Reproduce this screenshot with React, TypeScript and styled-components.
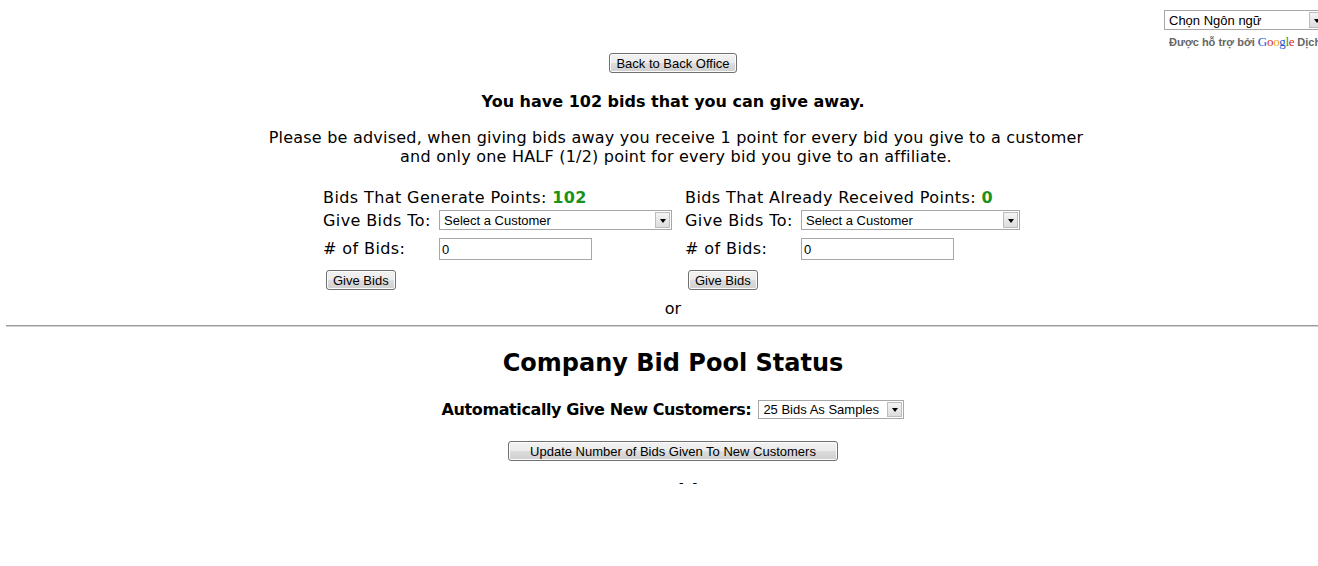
import React from "react";
import styled, { createGlobalStyle } from "styled-components";

const GlobalStyle = createGlobalStyle`
  html, body { margin: 0; padding: 0; background: #fff; overflow: hidden; }
  body { font-family: "DejaVu Sans", Verdana, sans-serif; color: #000; }
`;

const Page = styled.div`
  width: 1346px;
  height: 484px;
  overflow: hidden;
  display: flex;
  flex-direction: column;
  align-items: center;
  font-family: "DejaVu Sans", Verdana, sans-serif;
  font-size: 16px;
  & > * { flex-shrink: 0; }
`;

const TopBar = styled.div`
  align-self: stretch;
  display: flex;
  justify-content: flex-end;
  padding: 10px 20px 0 0;
  height: 53px;
  box-sizing: border-box;
`;

const LangWidget = styled.div`
  display: flex;
  flex-direction: column;
  width: 162px;
`;

const SelectWrap = styled.div<{ $w: number; $h?: number }>`
  position: relative;
  width: ${(p) => p.$w}px;
  height: ${(p) => p.$h ?? 20}px;
  box-sizing: border-box;
  border: 1px solid #a7a7a7;
  background: #fff;
  font-family: "Liberation Sans", Arial, sans-serif;
  font-size: 13px;
  font-weight: normal;
  letter-spacing: 0;
  color: #000;
  display: flex;
  align-items: center;
  padding-left: 4px;
  flex: none;
`;

const Arrow = styled.span`
  position: absolute;
  top: 1px;
  right: 1px;
  bottom: 1px;
  width: 15px;
  box-sizing: border-box;
  border: 1px solid #bdbdbd;
  background: linear-gradient(#f4f4f4, #dcdcdc);
  display: flex;
  align-items: center;
  justify-content: center;
  &::after {
    content: "";
    border-left: 3.5px solid transparent;
    border-right: 3.5px solid transparent;
    border-top: 4px solid #000;
    margin-top: 1px;
  }
`;

const PoweredBy = styled.div`
  margin-top: 4px;
  padding-left: 5px;
  font-family: "Liberation Sans", Arial, sans-serif;
  font-size: 11px;
  font-weight: bold;
  color: #666;
  white-space: nowrap;
  display: flex;
  align-items: baseline;
  gap: 3px;
`;

const GoogleLogo = styled.span`
  font-family: "Liberation Serif", "Times New Roman", serif;
  font-size: 13px;
  font-weight: normal;
  letter-spacing: -0.3px;
`;

const GLetter = styled.span<{ $c: string }>`
  color: ${(p) => p.$c};
`;

const Button = styled.button`
  font-family: "Liberation Sans", Arial, sans-serif;
  font-size: 13px;
  letter-spacing: 0;
  color: #000;
  height: 20px;
  padding: 0 6px;
  border: 1px solid #707070;
  border-radius: 3px;
  background: linear-gradient(#f2f2f2 0%, #ebebeb 50%, #dddddd 50%, #cfcfcf 100%);
  box-shadow: inset 0 0 0 1px #fcfcfc;
  line-height: 17px;
  cursor: pointer;
`;

const Heading = styled.div`
  margin-top: 19px;
  font-weight: bold;
  font-size: 16px;
  line-height: 19px;
`;

const Advice = styled.p`
  margin: 17px 0 0;
  text-align: center;
  line-height: 19px;
  font-size: 16px;
  letter-spacing: 0.22px;
  transform: translateX(3px);
`;

const Columns = styled.div`
  margin-top: 23px;
  display: grid;
  grid-template-columns: 362px 338px;
  width: 700px;
  letter-spacing: 0.4px;
`;

const Column = styled.div`
  display: grid;
  grid-template-columns: 116px auto;
  grid-template-rows: 18px 26px 31px 30px;
  align-items: center;
  justify-items: start;
`;

const Points = styled.div`
  grid-column: 1 / span 2;
  white-space: nowrap;
  align-self: end;
  line-height: 19px;
`;

const Green = styled.span`
  color: #1a921a;
  font-weight: bold;
`;

const Label = styled.div`
  white-space: nowrap;
  line-height: 19px;
`;

const TextInput = styled.input<{ $w: number }>`
  width: ${(p) => p.$w}px;
  height: 22px;
  box-sizing: border-box;
  border: 1px solid #a7a7a7;
  padding: 1px 2px 0;
  font-family: "Liberation Sans", Arial, sans-serif;
  font-size: 13px;
  letter-spacing: 0;
  color: #000;
  outline: none;
`;

const ButtonCell = styled.div`
  grid-column: 1 / span 2;
  padding-left: 3px;
  align-self: center;
  margin-top: 2px;
`;

const Or = styled.div`
  margin-top: 5px;
  line-height: 19px;
`;

const Rule = styled.hr`
  align-self: stretch;
  margin: 7px 6px 0;
  border: none;
  border-top: 1px solid #9a9a9a;
  border-bottom: 1px solid #d0d0d0;
  height: 0;
`;

const Title = styled.h2`
  margin: 22px 0 0;
  font-size: 24px;
  line-height: 28px;
  font-weight: bold;
`;

const AutoRow = styled.div`
  margin-top: 23px;
  display: flex;
  align-items: center;
  gap: 7px;
  font-weight: bold;
  letter-spacing: -0.4px;
`;

const UpdateButton = styled(Button)`
  margin-top: 22px;
  padding: 0 21px;
`;

const ClippedTitle = styled.h3`
  margin: 19px 0 0;
  font-size: 19px;
  line-height: 22px;
  font-weight: bold;
`;

const Select: React.FC<{ w: number; h?: number; children: React.ReactNode }> = ({ w, h, children }) => (
  <SelectWrap $w={w} $h={h}>
    {children}
    <Arrow />
  </SelectWrap>
);

const GiveColumn: React.FC<{ title: string; value: string; selW: number }> = ({ title, value, selW }) => (
  <Column>
    <Points>
      {title}: <Green>{value}</Green>
    </Points>
    <Label>Give Bids To:</Label>
    <Select w={selW}>Select a Customer</Select>
    <Label>#&nbsp;of Bids:</Label>
    <TextInput $w={153} defaultValue="0" />
    <ButtonCell>
      <Button>Give Bids</Button>
    </ButtonCell>
  </Column>
);

export default function App() {
  return (
    <>
      <GlobalStyle />
      <Page>
        <TopBar>
          <LangWidget>
            <Select w={162} h={20}>Chọn Ngôn ngữ</Select>
            <PoweredBy>
              Được hỗ trợ bởi
              <GoogleLogo>
                <GLetter $c="#1a55d6">G</GLetter>
                <GLetter $c="#d62d20">o</GLetter>
                <GLetter $c="#e8a400">o</GLetter>
                <GLetter $c="#1a55d6">g</GLetter>
                <GLetter $c="#1f9d3a">l</GLetter>
                <GLetter $c="#d62d20">e</GLetter>
              </GoogleLogo>
              <span>Dịch</span>
            </PoweredBy>
          </LangWidget>
        </TopBar>
        <Button>Back to Back Office</Button>
        <Heading>You have 102 bids that you can give away.</Heading>
        <Advice>
          Please be advised, when giving bids away you receive 1 point for every bid you give to a customer
          <br />
          and only one HALF (1/2) point for every bid you give to an affiliate.
        </Advice>
        <Columns>
          <GiveColumn title="Bids That Generate Points" value="102" selW={233} />
          <GiveColumn title="Bids That Already Received Points" value="0" selW={219} />
        </Columns>
        <Or>or</Or>
        <Rule />
        <Title>Company Bid Pool Status</Title>
        <AutoRow>
          Automatically Give New Customers:
          <Select w={146} h={19}>25 Bids As Samples</Select>
        </AutoRow>
        <UpdateButton>Update Number of Bids Given To New Customers</UpdateButton>
        <ClippedTitle>Current Bid Usage</ClippedTitle>
      </Page>
    </>
  );
}
